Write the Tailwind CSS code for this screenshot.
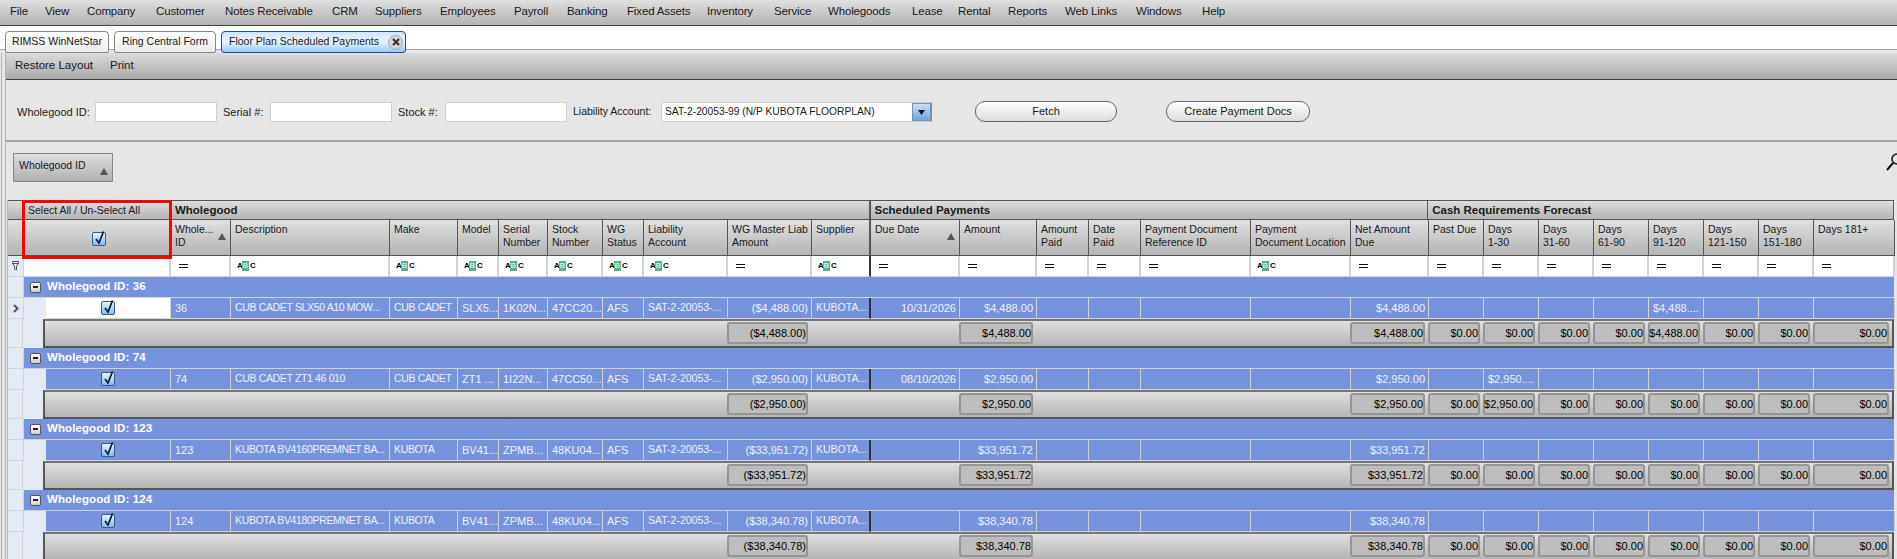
<!DOCTYPE html>
<html lang="en">
<head>
  <meta charset="UTF-8" />
  <title>Floor Plan Scheduled Payments</title>
  <script src="https://cdn.jsdelivr.net/npm/@tailwindcss/browser@4"></script>
</head>
<body class="bg-[#e6e6e6] text-[#1a1a1a] h-[559px] overflow-hidden font-['Liberation_Sans',sans-serif] text-[10.5px]">

  <!-- menu bar -->
  <nav class="h-[26px] flex items-center pl-[10px] pb-[1px] border-b border-[#444] bg-linear-to-b from-[#e0e0e0] to-[#b2b2b2] text-[11.5px] tracking-[-0.15px] whitespace-nowrap">
    <span class="w-[35px]">File</span><span class="w-[42px]">View</span><span class="w-[69px]">Company</span><span class="w-[69px]">Customer</span><span class="w-[107px]">Notes Receivable</span><span class="w-[43px]">CRM</span><span class="w-[65px]">Suppliers</span><span class="w-[74px]">Employees</span><span class="w-[53px]">Payroll</span><span class="w-[60px]">Banking</span><span class="w-[80px]">Fixed Assets</span><span class="w-[67px]">Inventory</span><span class="w-[54px]">Service</span><span class="w-[84px]">Wholegoods</span><span class="w-[46px]">Lease</span><span class="w-[50px]">Rental</span><span class="w-[57px]">Reports</span><span class="w-[71px]">Web Links</span><span class="w-[66px]">Windows</span><span class="w-[30px]">Help</span>
  </nav>

  <!-- tab strip -->
  <div class="h-[27px] flex items-start pl-[5px] pt-[5px] gap-[5px] whitespace-nowrap bg-[linear-gradient(#fff_23px,#a8a8a8_23px,#a8a8a8_24px,#e6e6e6_24px)]">
    <div class="h-[22px] w-[104px] flex items-center justify-center border border-[#888] rounded-t-[4px] rounded-b-[2px] bg-linear-to-b from-white to-[#ececec]">RIMSS WinNetStar</div>
    <div class="h-[22px] w-[102px] flex items-center justify-center border border-[#888] rounded-t-[4px] rounded-b-[2px] bg-linear-to-b from-white to-[#ececec]">Ring Central Form</div>
    <div class="h-[22px] w-[185px] flex items-center pl-[7px] gap-[11px] border border-[#27489a] rounded-t-[4px] rounded-b-[3px] bg-linear-to-b from-[#cfe4fa] via-[#eaf4fd] to-[#93c9f5]">
      <span class="w-[148px]">Floor Plan Scheduled Payments</span>
      <span class="w-[15px] h-[15px] shrink-0 rounded-full bg-[#d6d6d6] border border-[#a5a5a5] flex items-center justify-center">
        <svg width="8" height="8" viewBox="0 0 8 8"><path d="M1 1 7 7M7 1 1 7" stroke="#333" stroke-width="2"/></svg>
      </span>
    </div>
  </div>

  <div class="border-l border-[#b5b5b5] ml-[1px] pl-[3px]">
    <div class="border-l border-[#b5b5b5]">

      <!-- toolbar -->
      <div class="h-[27px] flex items-center pl-[9px] border-b border-b-[#444] bg-linear-to-b from-[#dcdcdc] to-[#a9a9a9] text-[11.5px] whitespace-nowrap">
        <span class="w-[95px]">Restore Layout</span><span>Print</span>
      </div>

      <!-- fetch form -->
      <div class="h-[62px] flex items-center pl-[11px] pt-[4px] border-b-2 border-b-[#a5a5a5] text-[11px] whitespace-nowrap">
        <span class="w-[78px]">Wholegood ID:</span>
        <input class="w-[122px] h-[20px] bg-white border border-[#cfcfcf]" />
        <span class="ml-[6px] w-[47px]">Serial #:</span>
        <input class="w-[122px] h-[20px] bg-white border border-[#cfcfcf]" />
        <span class="ml-[6px] w-[47px]">Stock #:</span>
        <input class="w-[122px] h-[20px] bg-white border border-[#cfcfcf]" />
        <span class="ml-[6px] w-[88px] text-[10.5px]">Liability Account:</span>
        <div class="w-[271px] h-[20px] bg-white border border-[#cfcfcf] border-r-[#888] flex items-center justify-between pl-[3px]">
          <span class="text-[10.25px]">SAT-2-20053-99 (N/P KUBOTA FLOORPLAN)</span>
          <span class="w-[19px] h-[18px] bg-linear-to-b from-[#c4e0f9] to-[#6ba5e2] border border-[#7f8fa8] flex items-center justify-center">
            <svg width="7" height="5" viewBox="0 0 7 5"><path d="M0 0h7L3.500 5z" fill="#111"/></svg>
          </span>
        </div>
        <button class="ml-[43px] w-[142px] h-[21px] mb-[1px] rounded-[10px] border border-[#666] bg-linear-to-b from-white to-[#dcdcdc]">Fetch</button>
        <button class="ml-[49px] w-[144px] h-[21px] mb-[1px] rounded-[10px] border border-[#666] bg-linear-to-b from-white to-[#dcdcdc]">Create Payment Docs</button>
      </div>

      <!-- group-by area -->
      <div class="h-[58px] pl-[7px] pt-[11px] flex justify-between">
        <div class="w-[100px] h-[29px] pl-[5px] pt-[4px] pr-[4px] border border-[#888] flex justify-between whitespace-nowrap bg-linear-to-b from-[#dedede] to-[#b0b0b0]">
          <span>Wholegood ID</span>
          <svg class="mt-[10px]" width="8" height="7" viewBox="0 0 8 7"><path d="M4 0 8 7H0z" fill="#555"/></svg>
        </div>
        <svg class="mt-[0px]" width="11" height="18" viewBox="0 0 11 18"><circle cx="11" cy="6" r="5" fill="none" stroke="#111" stroke-width="1.500"/><path d="M1 17 7 10" stroke="#111" stroke-width="2"/></svg>
      </div>

      <!-- grid -->
      <div id="grid" class="ml-[1px] mr-[3px] border-l border-[#bbb]"></div>
    </div>
  </div>

  <script>
    const cols = 'grid grid-cols-[16px_147px_60px_159px_68px_41px_49px_55px_41px_84px_84px_59px_89px_77px_52px_52px_110px_100px_78px_55px_55px_55px_55px_55px_55px_55px_81px]';
    const hdrCell = 'border-r border-[#555] border-b bg-linear-to-b from-[#e0e0e0] to-[#b4b4b4] pl-[4px] pt-[3px] leading-[13px] whitespace-nowrap overflow-hidden relative';
    const filterCell = 'h-[21px] bg-white border-r-2 border-[#d2d2d2] border-b flex items-center';
    const dataCell = 'h-[21px] bg-[#7893dd] border-r border-b border-[#d2d2d2] text-[#eef1fb] pl-[4px] pr-[3px] flex items-center whitespace-nowrap overflow-hidden';
    const sumCell = 'h-[22px] ml-[2px] mr-[1px] bg-[#bdbdbd] border-2 border-[#959595] rounded-[3px] flex items-center justify-end text-black text-[11px] whitespace-nowrap';

    const sortUp = '<svg class="absolute right-[4px] bottom-[15px]" width="8" height="7" viewBox="0 0 8 7"><path d="M4 0 8 7H0z" fill="#555"/></svg>';
    const eq = '<svg class="ml-[8px]" width="9" height="4" viewBox="0 0 9 4"><path d="M0 .5h9M0 3.500h9" stroke="#111"/></svg>';
    const abc = '<span class="ml-[6px] flex items-center text-[8px] leading-[10px] font-bold font-[\'Liberation_Mono\',monospace] text-black"><span class="w-[5px]">A</span><span class="w-[7px] h-[10px] bg-[#55b090] text-[#c6ebdd] text-center">B</span><span class="w-[5px] pl-[1px]">C</span></span>';
    const filterIcon = '<svg width="7" height="10" viewBox="0 0 7 10"><path d="M.500.500h6v2L4.500 5v4l-2-1V5L.500 2.500z" fill="none" stroke="#555"/><path d="M.500 2.500h6" stroke="#555"/></svg>';
    const chk = '<span class="relative block w-[14px] h-[14px] rounded-[2px] border border-[#3c5a8a] bg-linear-to-b from-[#eaf2fd] to-[#7cbcf4]"><svg class="absolute left-[1px] top-[-3px]" width="12" height="15" viewBox="0 0 12 15"><path d="M2 9 5 13 9.500 1.500" fill="none" stroke="#10203a" stroke-width="1.800"/></svg></span>';
    const minus = '<span class="w-[11px] h-[11px] rounded-[2px] border border-[#555] bg-linear-to-b from-white to-[#cfcfcf] flex items-center justify-center"><span class="w-[5px] h-[2px] bg-[#222]"></span></span>';

    // column headers, same order as the grid template after selector + check column
    const headers = [
      ['Whole...<br>ID', 'eq', true], ['Description', 'abc'], ['Make', 'abc'], ['Model', 'abc'],
      ['Serial<br>Number', 'abc'], ['Stock<br>Number', 'abc'], ['WG<br>Status', 'abc'],
      ['Liability<br>Account', 'abc'], ['WG Master Liab<br>Amount', 'eq'], ['Supplier', 'abc'],
      ['Due Date', 'eq', true], ['Amount', 'eq'], ['Amount<br>Paid', 'eq'], ['Date<br>Paid', 'eq'],
      ['Payment Document<br>Reference ID', 'eq'], ['Payment<br>Document Location', 'abc'], ['Net Amount<br>Due', 'eq'],
      ['Past Due', 'eq'], ['Days<br>1-30', 'eq'], ['Days<br>31-60', 'eq'], ['Days<br>61-90', 'eq'],
      ['Days<br>91-120', 'eq'], ['Days<br>121-150', 'eq'], ['Days<br>151-180', 'eq'], ['Days 181+', 'eq']
    ];

    const groups = [
      { id: 36, desc: 'CUB CADET SLX50 A10 MOW...', make: 'CUB CADET', model: 'SLX5...', serial: '1K02N...', stock: '47CC20...', neg: '($4,488.00)', due: '10/31/2026', amt: '$4,488.00', bucket: 4, cut: '$4,488....', active: true },
      { id: 74, desc: 'CUB CADET ZT1 46 010', make: 'CUB CADET', model: 'ZT1 ...', serial: '1I22N...', stock: '47CC50...', neg: '($2,950.00)', due: '08/10/2026', amt: '$2,950.00', bucket: 1, cut: '$2,950....' },
      { id: 123, desc: 'KUBOTA BV4160PREMNET BA...', make: 'KUBOTA', model: 'BV41...', serial: 'ZPMB...', stock: '48KU04...', neg: '($33,951.72)', amt: '$33,951.72', bucket: -1 },
      { id: 124, desc: 'KUBOTA BV4180PREMNET BA...', make: 'KUBOTA', model: 'BV41...', serial: 'ZPMB...', stock: '48KU04...', neg: '($38,340.78)', amt: '$38,340.78', bucket: -1 }
    ];

    let html = `
      <div class="h-[20px] flex border-y border-[#555] leading-[18px] font-bold text-[11.500px] whitespace-nowrap">
        <div class="w-[16px] border-r border-[#555] bg-linear-to-b from-[#dedede] to-[#b4b4b4]"></div>
        <div class="w-[147px] font-normal text-[10.500px] border-r border-[#555] pl-[4px] bg-linear-to-b from-[#dedede] to-[#b4b4b4]">Select All / Un-Select All</div>
        <div class="w-[700px] border-r-2 border-[#555] pl-[4px] bg-linear-to-b from-[#dedede] to-[#b4b4b4]">Wholegood</div>
        <div class="w-[558px] border-r border-[#555] pl-[4px] bg-linear-to-b from-[#dedede] to-[#b4b4b4]">Scheduled Payments</div>
        <div class="w-[466px] border-r border-[#555] pl-[4px] bg-linear-to-b from-[#dedede] to-[#b4b4b4]">Cash Requirements Forecast</div>
      </div>
      <div class="${cols} h-[36px]">
        <div class="${hdrCell}"></div>
        <div class="${hdrCell} flex items-center justify-center">${chk}</div>
        ${headers.map((h, i) => `<div class="${hdrCell} ${i === 9 ? 'border-r-2' : ''}">${h[0]}${h[2] ? sortUp : ''}</div>`).join('')}
      </div>
      <div class="${cols} h-[21px]">
        <div class="h-[21px] bg-[#e3e9f5] border-r border-b border-[#d2d2d2] flex items-center justify-center">${filterIcon}</div>
        <div class="${filterCell}"></div>
        ${headers.map((h, i) => `<div class="${filterCell} ${i === 9 ? 'border-r-[#333]' : ''}">${h[1] === 'eq' ? eq : abc}</div>`).join('')}
      </div>`;

    groups.forEach(g => {
      const buckets = [0,1,2,3,4,5,6,7].map(i => i === g.bucket ? g.cut : '');
      const cells = [g.id, g.desc, g.make, g.model, g.serial, g.stock, 'AFS', 'SAT-2-20053-...', g.neg, 'KUBOTA...', g.due || '', g.amt, '', '', '', '', g.amt, ...buckets];
      const right = [8, 10, 11, 16];
      const sums = [8, 11, 16];
      const textSize = i => {
        if (i === 1 || i === 2) return 'text-[10.500px] tracking-[-0.35px]';
        if (i === 7 || i === 9) return 'text-[10.500px]';
        return 'text-[11px]';
      };
      html += `
        <div class="flex h-[21px]">
          <div class="w-[16px] bg-[#e3e9f5] border-r border-b border-[#d2d2d2]"></div>
          <div class="w-[1871px] bg-[#7893dd] border-b border-[#d2d2d2] flex items-center gap-[6px] pl-[6px] text-white font-bold text-[11.500px] tracking-[0.1px]">${minus}<span>Wholegood ID: ${g.id}</span></div>
        </div>
        <div class="${cols}">
          <div class="h-[21px] bg-[#e3e9f5] border-r border-b border-[#d2d2d2] flex items-center justify-center">${g.active ? '<svg width="6" height="9" viewBox="0 0 6 9"><path d="M1 1 4.500 4.500 1 8" fill="none" stroke="#555" stroke-width="2"/></svg>' : ''}</div>
          <div class="h-[21px] bg-[#e3e9f5] flex">
            <div class="w-[22px]"></div>
            <div class="flex-1 flex items-center justify-center border-r border-b border-[#d2d2d2] ${g.active ? 'bg-white' : 'bg-[#7893dd]'}">${chk}</div>
          </div>
          ${cells.map((c, i) => `<div class="${dataCell} ${textSize(i)} ${right.includes(i) ? 'justify-end' : ''} ${i === 9 ? 'border-r-2 border-r-[#333]' : ''}">${c}</div>`).join('')}
        </div>
        <div class="flex h-[29px]">
          <div class="w-[16px] bg-[#e3e9f5] border-r border-b border-[#d2d2d2]"></div>
          <div class="w-[22px] bg-[#e3e9f5]"></div>
          <div class="flex-1 border-2 border-[#555] border-t-[#777] pt-[1px] bg-linear-to-b from-[#e0e0e0] to-[#b4b4b4]">
            <div class="${cols} ml-[-40px] items-start">
              <div></div><div></div>
              ${headers.map((h, i) => {
                if (sums.includes(i)) return `<div class="${sumCell}">${i === 8 ? g.neg : g.amt}</div>`;
                if (i > 16) return `<div class="${sumCell} ${i === 24 ? 'mr-[3px]' : ''}">${i - 17 === g.bucket ? g.amt : '$0.00'}</div>`;
                return '<div></div>';
              }).join('')}
            </div>
          </div>
        </div>`;
    });

    document.getElementById('grid').innerHTML = html;
  </script>

  <!-- red highlight drawn on the screenshot -->
  <div class="absolute left-[22px] top-[200px] w-[150px] h-[59px] border-[3px] border-[#fe0000] pointer-events-none"></div>
</body>
</html>
